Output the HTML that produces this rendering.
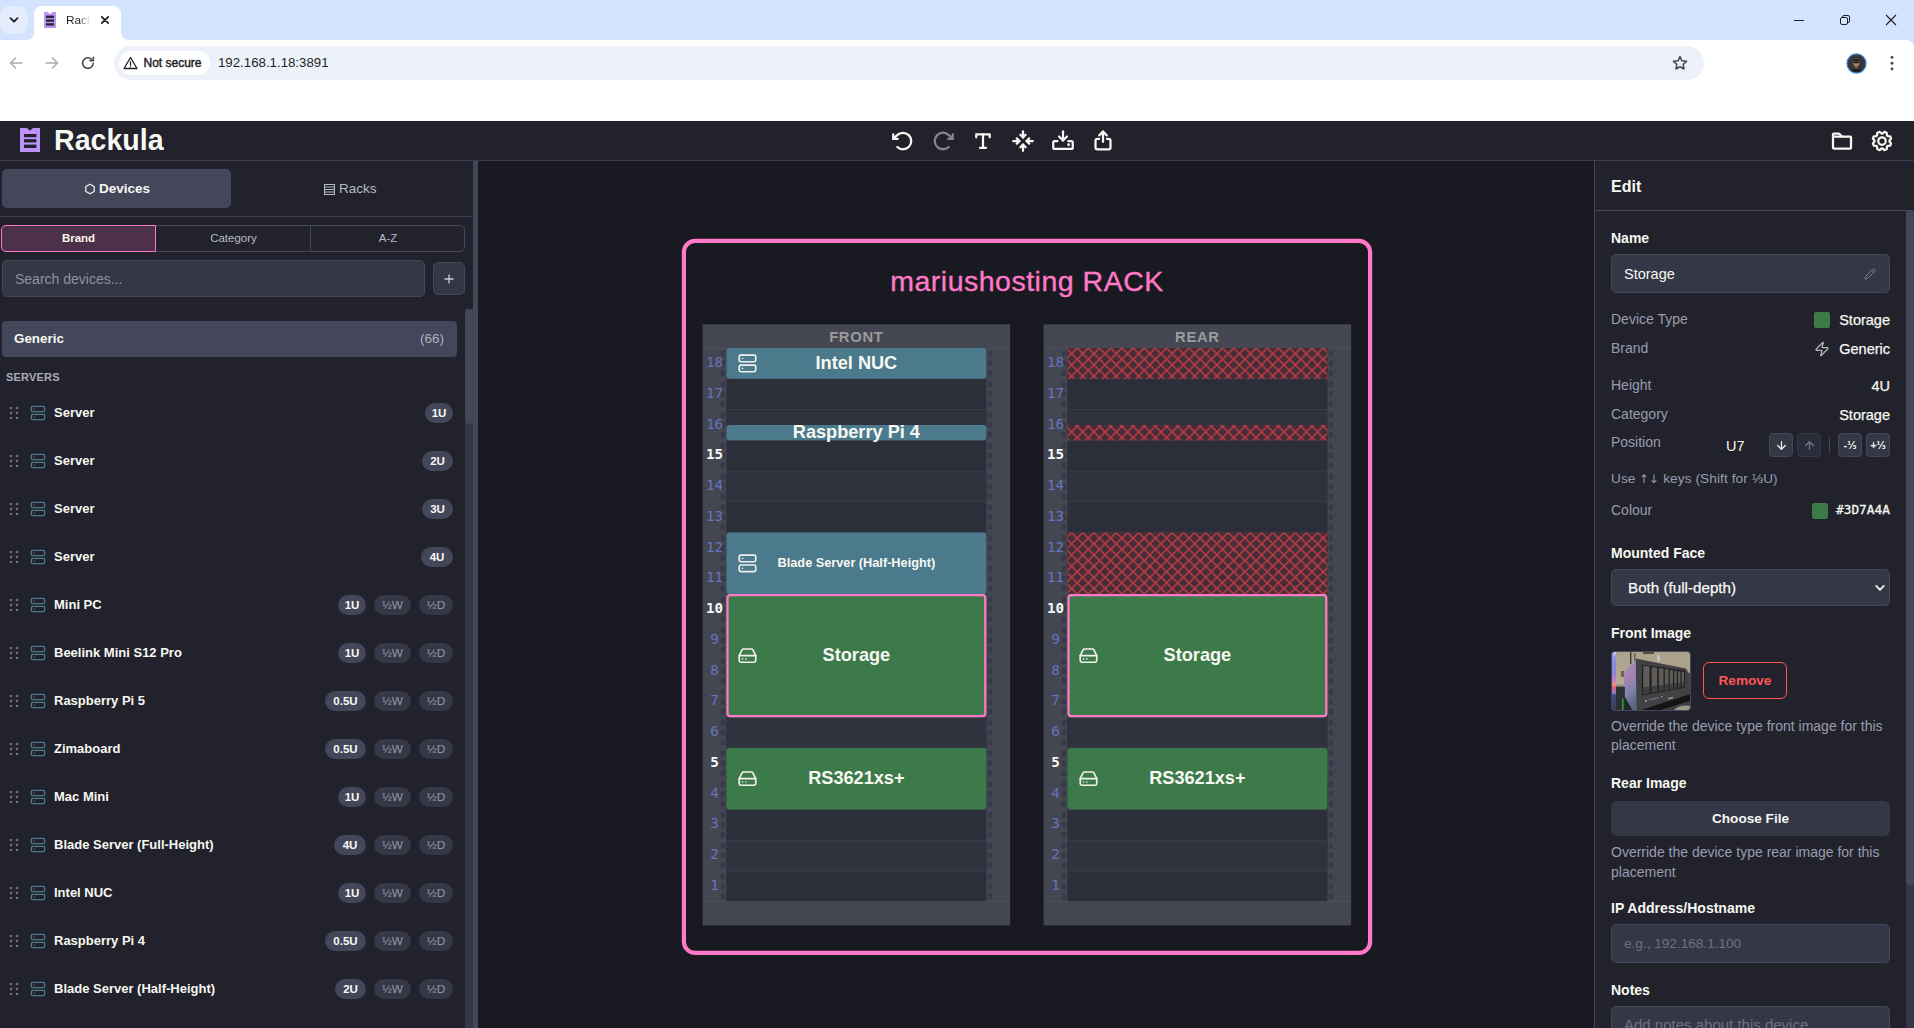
<!DOCTYPE html>
<html lang="en"><head><meta charset="utf-8"><title>Rackula</title>
<style>
*{box-sizing:border-box;margin:0;padding:0}
html,body{width:1914px;height:1028px;overflow:hidden;background:#d3e3fd}
body{position:relative;font-family:"Liberation Sans",sans-serif;color:#f8f8f2;-webkit-font-smoothing:antialiased}
.abs{position:absolute}
.t{position:absolute;white-space:nowrap;line-height:1}
.mono{font-family:"DejaVu Sans Mono","Liberation Mono",monospace}
/* chrome */
#tabstrip{position:absolute;left:0;top:0;width:1914px;height:40px;background:#d3e3fd}
#toolbar{position:absolute;left:0;top:40px;width:1914px;height:81px;background:#fff;border-top-right-radius:8px}
/* app */
#app{position:absolute;left:0;top:121px;width:1914px;height:907px;background:#191a21;overflow:hidden}
#hdr{position:absolute;left:0;top:0;width:1914px;height:40px;background:#21222c;border-bottom:1px solid #3b3d4e}
#side{position:absolute;left:0;top:40px;width:473px;height:867px;background:#21222c;overflow:hidden}
#split{position:absolute;left:473px;top:40px;width:5px;height:867px;background:#44475a}
#panel{position:absolute;left:1594px;top:40px;width:320px;height:867px;background:#21222c;border-left:1px solid #44475a;overflow:hidden}
.pill{position:absolute;height:20px;border-radius:10px;background:#44475a;color:#f8f8f2;font-weight:bold;font-size:11.5px;line-height:20px;text-align:center}
.pill.h{background:#363848;color:#9799a8;font-weight:normal;font-size:11.8px}
.lbl{position:absolute;white-space:nowrap;line-height:1;font-weight:bold;font-size:14px;color:#f8f8f2}
.mut{position:absolute;white-space:nowrap;line-height:1;font-size:14px;color:#9a9cb0}
.val{position:absolute;white-space:nowrap;line-height:1;font-size:14.5px;color:#f8f8f2;text-align:right;-webkit-text-stroke:0.25px #f8f8f2}
.inp{position:absolute;background:#343746;border:1px solid #44475a;border-radius:5px}
.sbtn{position:absolute;width:24px;height:24px;border-radius:4px;background:#343746;border:1px solid #44475a;color:#f8f8f2;font-size:11px;font-weight:bold;line-height:22px;text-align:center}

</style></head><body>
<div id="tabstrip"><div class="abs" style="left:0;top:6px;width:28px;height:28px;border-radius:9px;background:#e4ecfc"></div><svg class="abs" style="left:8px;top:14px" width="12" height="12" viewBox="0 0 12 12" fill="none" stroke="#1f1f1f" stroke-width="1.8" stroke-linecap="round" stroke-linejoin="round"><path d="M2.5 4.2 6 7.7l3.5-3.5"/></svg><svg class="abs" style="left:26px;top:6px" width="104" height="34" viewBox="0 0 104 34"><path d="M0 34 C5 34 8 31 8 26 V8 C8 3.5 11.5 0 16 0 H87 C91.5 0 95 3.5 95 8 V26 C95 31 98 34 104 34 Z" fill="#fff"/></svg><svg class="abs" style="left:44px;top:12px" width="12" height="16" viewBox="0 0 12 16"><path d="M0 0H3.5L6 2 8.5 0H12V16H0Z" fill="#bd93f9"/><rect x="2" y="3.6" width="8" height="2.4" fill="#282a36"/><rect x="2" y="7.4" width="8" height="2.4" fill="#282a36"/><rect x="2" y="11.2" width="8" height="2.4" fill="#282a36"/></svg><div class="t" style="left:66px;top:15px;font-size:11.8px;color:#1f1f1f;width:24px;overflow:hidden;-webkit-mask-image:linear-gradient(90deg,#000 55%,transparent 100%);mask-image:linear-gradient(90deg,#000 55%,transparent 100%)">Rackula</div><svg class="abs" style="left:100px;top:15.2px" width="10" height="10" viewBox="0 0 10 10" stroke="#1f1f1f" stroke-width="1.75" stroke-linecap="round"><path d="M1.8 1.8l6.4 6.4M8.2 1.8l-6.4 6.4"/></svg><svg class="abs" style="left:1793px;top:14px" width="12" height="12" viewBox="0 0 12 12" stroke="#1f1f1f" stroke-width="1" fill="none"><path d="M1 6.5h10"/></svg><svg class="abs" style="left:1839px;top:14px" width="12" height="12" viewBox="0 0 12 12" stroke="#1f1f1f" stroke-width="1" fill="none"><rect x="1.5" y="3.5" width="7" height="7" rx="1.5"/><path d="M3.5 3.5V3A1.5 1.5 0 0 1 5 1.5h4A1.5 1.5 0 0 1 10.5 3v4A1.5 1.5 0 0 1 9 8.5h-.5"/></svg><svg class="abs" style="left:1885px;top:14px" width="12" height="12" viewBox="0 0 12 12" stroke="#1f1f1f" stroke-width="1.1" fill="none"><path d="M1 1l10 10M11 1L1 11"/></svg></div><div id="toolbar"><svg class="abs" style="left:8px;top:15px" width="16" height="16" viewBox="0 0 16 16" stroke="#a8abb0" stroke-width="1.5" fill="none" stroke-linecap="round" stroke-linejoin="round"><path d="M14 8H2.5M7.5 3 2.5 8l5 5"/></svg><svg class="abs" style="left:44px;top:15px" width="16" height="16" viewBox="0 0 16 16" stroke="#a8abb0" stroke-width="1.5" fill="none" stroke-linecap="round" stroke-linejoin="round"><path d="M2 8h11.5M8.5 3l5 5-5 5"/></svg><svg class="abs" style="left:80px;top:15px" width="16" height="16" viewBox="0 0 16 16" stroke="#474747" stroke-width="1.6" fill="none" stroke-linecap="round" stroke-linejoin="round"><path d="M13.2 8.3A5.3 5.3 0 1 1 11.6 4.2"/><path d="M13.4 2.2v3.4H10" fill="none"/></svg><div class="abs" style="left:114px;top:6px;width:1590px;height:34px;border-radius:17px;background:#edf2fa"></div><div class="abs" style="left:119px;top:11px;width:91px;height:24px;border-radius:12px;background:#fff"></div><svg class="abs" style="left:123px;top:16px" width="15" height="14" viewBox="0 0 15 14" fill="none" stroke="#1f1f1f" stroke-width="1.3" stroke-linejoin="round" stroke-linecap="round"><path d="M7.5 1.5 14 12.5H1Z"/><path d="M7.5 5.8v3.4"/><path d="M7.5 10.8v.1"/></svg><div class="t" style="left:143.5px;top:17px;font-size:12px;color:#1f1f1f;-webkit-text-stroke:0.45px #1f1f1f">Not secure</div><div class="t" style="left:218px;top:16px;font-size:13.25px;color:#1f1f1f">192.168.1.18:3891</div><svg class="abs" style="left:1671px;top:14px" width="18" height="18" viewBox="0 0 24 24" fill="none" stroke="#474747" stroke-width="2" stroke-linejoin="round"><path d="M12 3.5l2.6 5.6 6.1.7-4.5 4.2 1.2 6L12 17l-5.4 3 1.2-6-4.5-4.2 6.1-.7z"/></svg><svg class="abs" style="left:1845.5px;top:12.7px" width="21" height="21" viewBox="0 0 21 21"><circle cx="10.5" cy="10.5" r="9.4" fill="#37363a"/><ellipse cx="10.3" cy="9.6" rx="3.1" ry="4" fill="#a98265"/><path d="M6.8 7.2Q10.3 4.2 13.6 7.200L13.4 8.400H7Z" fill="#241f1f"/><rect x="7.4" y="8.7" width="5.6" height="1.6" rx="0.7" fill="#1b1a1c"/><path d="M4.5 18Q10.5 12.5 16.5 18Q10.5 21.5 4.5 18Z" fill="#1f1e22"/><path d="M9 13.200h2.800l-0.3 2.300h-2.200Z" fill="#8e6c55"/><circle cx="10.5" cy="10.5" r="9.6" fill="none" stroke="#3a8ad6" stroke-width="1.1"/></svg><svg class="abs" style="left:1884px;top:14px" width="16" height="18" viewBox="0 0 16 18" fill="#474747"><circle cx="8" cy="3.4" r="1.45"/><circle cx="8" cy="9.2" r="1.45"/><circle cx="8" cy="15" r="1.45"/></svg></div><div id="app"><div id="hdr"><svg class="abs" style="left:20px;top:7px" width="20" height="24" viewBox="0 0 20 24"><path d="M0 0H7L10 2.8 13 0H20V24H0Z" fill="#bd93f9"/><rect x="4" y="6" width="12.4" height="3.2" fill="#21222c"/><rect x="4" y="11.2" width="12.4" height="3.2" fill="#21222c"/><rect x="4" y="16.6" width="12.4" height="3.4" fill="#21222c"/></svg><div class="t" id="brandname" style="left:54px;top:5px;font-size:28.6px;font-weight:bold;color:#f8f8f2;letter-spacing:0px">Rackula</div><svg class="abs" style="left:891px;top:8px" width="24" height="24" viewBox="0 0 256 256" fill="none" stroke="#f8f8f2" stroke-width="24" stroke-linecap="round" stroke-linejoin="round"><polyline points="24 56 24 104 72 104"/><path d="M67.59,192A88,88,0,1,0,65.77,65.77L24,104"/></svg><svg class="abs" style="left:931px;top:8px" width="24" height="24" viewBox="0 0 256 256" fill="none" stroke="#85868f" stroke-width="24" stroke-linecap="round" stroke-linejoin="round"><polyline points="184 104 232 104 232 56"/><path d="M188.4,192a88,88,0,1,1,1.83-126.23L232,104"/></svg><svg class="abs" style="left:971px;top:8px" width="24" height="24" viewBox="0 0 256 256" fill="none" stroke="#f8f8f2" stroke-width="24" stroke-linecap="round" stroke-linejoin="round"><line x1="128" y1="56" x2="128" y2="200"/><polyline points="56 88 56 56 200 56 200 88"/><line x1="96" y1="200" x2="160" y2="200"/></svg><svg class="abs" style="left:1011px;top:8px" width="24" height="24" viewBox="0 0 256 256" fill="none" stroke="#f8f8f2" stroke-width="24" stroke-linecap="round" stroke-linejoin="round"><line x1="128" y1="24" x2="128" y2="90"/><polyline points="100 62 128 90 156 62"/><line x1="128" y1="232" x2="128" y2="166"/><polyline points="100 194 128 166 156 194"/><line x1="24" y1="128" x2="90" y2="128"/><polyline points="62 100 90 128 62 156"/><line x1="232" y1="128" x2="166" y2="128"/><polyline points="194 100 166 128 194 156"/></svg><svg class="abs" style="left:1051px;top:8px" width="24" height="24" viewBox="0 0 256 256" fill="none" stroke="#f8f8f2" stroke-width="24" stroke-linecap="round" stroke-linejoin="round"><polyline points="86 80 128 122 170 80"/><line x1="128" y1="24" x2="128" y2="122"/><path d="M184,129h32a16,16,0,0,1,16,16v51a16,16,0,0,1-16,16H40a16,16,0,0,1-16-16V145a16,16,0,0,1,16-16H70"/><circle cx="188" cy="168" r="15" fill="#f8f8f2" stroke="none"/></svg><svg class="abs" style="left:1091px;top:8px" width="24" height="24" viewBox="0 0 256 256" fill="none" stroke="#f8f8f2" stroke-width="24" stroke-linecap="round" stroke-linejoin="round"><polyline points="88 68 128 28 168 68"/><line x1="128" y1="136" x2="128" y2="28"/><path d="M170,106h18a20,20,0,0,1,20,20v70a20,20,0,0,1-20,20H68a20,20,0,0,1-20-20V126a20,20,0,0,1,20-20H86"/></svg><svg class="abs" style="left:1830px;top:8px" width="24" height="24" viewBox="0 0 256 256" fill="none" stroke="#f8f8f2" stroke-width="24" stroke-linecap="round" stroke-linejoin="round"><path d="M32,80V56a8,8,0,0,1,8-8H92.690a8,8,0,0,1,5.650,2.340L128,80"/><path d="M216.890,208H39.380A7.400,7.400,0,0,1,32,200.620V80H216a8,8,0,0,1,8,8V200.890A7.110,7.110,0,0,1,216.890,208Z"/></svg><svg class="abs" style="left:1870px;top:8px" width="24" height="24" viewBox="0 0 256 256" fill="none" stroke="#f8f8f2" stroke-width="24" stroke-linecap="round" stroke-linejoin="round"><circle cx="128" cy="128" r="40"/><path d="M41.43,178.09A99.14,99.14,0,0,1,31.36,153.8l16.78-21a81.59,81.59,0,0,1,0-9.64l-16.77-21a99.43,99.43,0,0,1,10.05-24.3l26.71-3a81,81,0,0,1,6.81-6.81l3-26.7A99.14,99.14,0,0,1,102.2,31.36l21,16.78a81.59,81.59,0,0,1,9.64,0l21-16.77a99.43,99.43,0,0,1,24.3,10.05l3,26.71a81,81,0,0,1,6.81,6.81l26.7,3a99.14,99.14,0,0,1,10.07,24.29l-16.78,21a81.59,81.59,0,0,1,0,9.64l16.77,21a99.43,99.43,0,0,1-10,24.3l-26.71,3a81,81,0,0,1-6.81,6.81l-3,26.7a99.14,99.14,0,0,1-24.29,10.07l-21-16.78a81.59,81.59,0,0,1-9.64,0l-21,16.77a99.43,99.43,0,0,1-24.3-10l-3-26.71a81,81,0,0,1-6.81-6.81Z"/></svg></div><div id="side"><div class="abs" style="left:2px;top:8px;width:229px;height:39px;border-radius:5px;background:#44475a"></div><svg class="abs" style="left:84px;top:22px" width="12" height="12" viewBox="0 0 12 12" fill="none" stroke="#f8f8f2" stroke-width="1.2" stroke-linejoin="round"><path d="M6 1.2 10.2 3.6V8.4L6 10.8 1.8 8.4V3.6Z"/></svg><div class="t" style="left:99px;top:21px;font-size:13.5px;font-weight:bold;color:#f8f8f2">Devices</div><svg class="abs" style="left:324px;top:22.599999999999994px" width="11" height="11" viewBox="0 0 11 11" fill="none" stroke="#b9bbc8" stroke-width="1"><rect x="0.5" y="0.5" width="10" height="10"/><path d="M0.5 3h10M0.5 5.5h10M0.5 8h10"/></svg><div class="t" style="left:339px;top:21px;font-size:13.5px;color:#b9bbc8">Racks</div><div class="abs" style="left:0;top:55px;width:473px;height:1px;background:#3b3d4e"></div><div class="abs" style="left:1px;top:64px;width:464px;height:27px;border:1px solid #44475a;border-radius:5px"></div><div class="abs" style="left:310px;top:64px;width:1px;height:27px;background:#44475a"></div><div class="abs" style="left:1px;top:64px;width:155px;height:27px;border:1px solid #ff79c6;border-radius:5px 0 0 5px;background:#4d3049"></div><div class="t" style="left:1px;width:155px;text-align:center;top:72px;font-size:11.5px;font-weight:bold;color:#f8f8f2">Brand</div><div class="t" style="left:156px;width:155px;text-align:center;top:72px;font-size:11.5px;color:#b9bbc8">Category</div><div class="t" style="left:311px;width:154px;text-align:center;top:72px;font-size:11.5px;color:#b9bbc8">A-Z</div><div class="inp" style="left:2px;top:99px;width:423px;height:37px"></div><div class="t" style="left:15px;top:110.60000000000002px;font-size:14px;color:#8f91a3">Search devices...</div><div class="inp" style="left:433px;top:101px;width:32px;height:33px"></div><svg class="abs" style="left:444px;top:112.5px" width="10" height="10" viewBox="0 0 10 10" stroke="#c9cbd6" stroke-width="1.3" fill="none"><path d="M5 0.5v9M0.5 5h9"/></svg><div class="abs" style="left:465px;top:148px;width:8px;height:720px;background:#343746"></div><div class="abs" style="left:465px;top:148px;width:8px;height:115px;border-radius:4px;background:#44475a"></div><div class="abs" style="left:2px;top:160px;width:455px;height:36px;border-radius:4px;background:#44475a"></div><div class="t" style="left:14px;top:170.8px;font-size:13.4px;font-weight:bold;color:#f8f8f2">Generic</div><div class="t" style="left:390px;width:54px;text-align:right;top:171px;font-size:13.5px;color:#b0b2c0">(66)</div><div class="t" style="left:6px;top:211px;font-size:11px;font-weight:bold;color:#a9abbb;letter-spacing:0.2px">SERVERS</div><svg class="abs" style="left:9px;top:245.04999999999998px" width="10" height="14" viewBox="0 0 10 14" fill="#6f7082"><circle cx="2" cy="2" r="1.3"/><circle cx="2" cy="7" r="1.3"/><circle cx="2" cy="12" r="1.3"/><circle cx="8" cy="2" r="1.3"/><circle cx="8" cy="7" r="1.3"/><circle cx="8" cy="12" r="1.3"/></svg><svg style="position:absolute;left:30px;top:244.2px;" width="16" height="16" viewBox="0 0 24 24" fill="none" stroke="#4a7a8c" stroke-width="2" stroke-linecap="round" stroke-linejoin="round"><rect width="20" height="8" x="2" y="2" rx="2" ry="2"/><rect width="20" height="8" x="2" y="14" rx="2" ry="2"/><line x1="6" x2="6.01" y1="6" y2="6"/><line x1="6" x2="6.01" y1="18" y2="18"/></svg><div class="t" style="left:54px;top:244.89999999999998px;font-size:13px;font-weight:bold;color:#f8f8f2">Server</div><div class="pill" style="left:425px;top:241.89999999999998px;width:28px">1U</div><svg class="abs" style="left:9px;top:293.04999999999995px" width="10" height="14" viewBox="0 0 10 14" fill="#6f7082"><circle cx="2" cy="2" r="1.3"/><circle cx="2" cy="7" r="1.3"/><circle cx="2" cy="12" r="1.3"/><circle cx="8" cy="2" r="1.3"/><circle cx="8" cy="7" r="1.3"/><circle cx="8" cy="12" r="1.3"/></svg><svg style="position:absolute;left:30px;top:292.2px;" width="16" height="16" viewBox="0 0 24 24" fill="none" stroke="#4a7a8c" stroke-width="2" stroke-linecap="round" stroke-linejoin="round"><rect width="20" height="8" x="2" y="2" rx="2" ry="2"/><rect width="20" height="8" x="2" y="14" rx="2" ry="2"/><line x1="6" x2="6.01" y1="6" y2="6"/><line x1="6" x2="6.01" y1="18" y2="18"/></svg><div class="t" style="left:54px;top:292.9px;font-size:13px;font-weight:bold;color:#f8f8f2">Server</div><div class="pill" style="left:422px;top:289.9px;width:31px">2U</div><svg class="abs" style="left:9px;top:341.04999999999995px" width="10" height="14" viewBox="0 0 10 14" fill="#6f7082"><circle cx="2" cy="2" r="1.3"/><circle cx="2" cy="7" r="1.3"/><circle cx="2" cy="12" r="1.3"/><circle cx="8" cy="2" r="1.3"/><circle cx="8" cy="7" r="1.3"/><circle cx="8" cy="12" r="1.3"/></svg><svg style="position:absolute;left:30px;top:340.2px;" width="16" height="16" viewBox="0 0 24 24" fill="none" stroke="#4a7a8c" stroke-width="2" stroke-linecap="round" stroke-linejoin="round"><rect width="20" height="8" x="2" y="2" rx="2" ry="2"/><rect width="20" height="8" x="2" y="14" rx="2" ry="2"/><line x1="6" x2="6.01" y1="6" y2="6"/><line x1="6" x2="6.01" y1="18" y2="18"/></svg><div class="t" style="left:54px;top:340.9px;font-size:13px;font-weight:bold;color:#f8f8f2">Server</div><div class="pill" style="left:422px;top:337.9px;width:31px">3U</div><svg class="abs" style="left:9px;top:389.04999999999995px" width="10" height="14" viewBox="0 0 10 14" fill="#6f7082"><circle cx="2" cy="2" r="1.3"/><circle cx="2" cy="7" r="1.3"/><circle cx="2" cy="12" r="1.3"/><circle cx="8" cy="2" r="1.3"/><circle cx="8" cy="7" r="1.3"/><circle cx="8" cy="12" r="1.3"/></svg><svg style="position:absolute;left:30px;top:388.2px;" width="16" height="16" viewBox="0 0 24 24" fill="none" stroke="#4a7a8c" stroke-width="2" stroke-linecap="round" stroke-linejoin="round"><rect width="20" height="8" x="2" y="2" rx="2" ry="2"/><rect width="20" height="8" x="2" y="14" rx="2" ry="2"/><line x1="6" x2="6.01" y1="6" y2="6"/><line x1="6" x2="6.01" y1="18" y2="18"/></svg><div class="t" style="left:54px;top:388.9px;font-size:13px;font-weight:bold;color:#f8f8f2">Server</div><div class="pill" style="left:421px;top:385.9px;width:32px">4U</div><svg class="abs" style="left:9px;top:437.04999999999995px" width="10" height="14" viewBox="0 0 10 14" fill="#6f7082"><circle cx="2" cy="2" r="1.3"/><circle cx="2" cy="7" r="1.3"/><circle cx="2" cy="12" r="1.3"/><circle cx="8" cy="2" r="1.3"/><circle cx="8" cy="7" r="1.3"/><circle cx="8" cy="12" r="1.3"/></svg><svg style="position:absolute;left:30px;top:436.2px;" width="16" height="16" viewBox="0 0 24 24" fill="none" stroke="#4a7a8c" stroke-width="2" stroke-linecap="round" stroke-linejoin="round"><rect width="20" height="8" x="2" y="2" rx="2" ry="2"/><rect width="20" height="8" x="2" y="14" rx="2" ry="2"/><line x1="6" x2="6.01" y1="6" y2="6"/><line x1="6" x2="6.01" y1="18" y2="18"/></svg><div class="t" style="left:54px;top:436.9px;font-size:13px;font-weight:bold;color:#f8f8f2">Mini PC</div><div class="pill h" style="left:419px;top:433.9px;width:34px">½D</div><div class="pill h" style="left:374px;top:433.9px;width:37px">½W</div><div class="pill" style="left:338px;top:433.9px;width:28px">1U</div><svg class="abs" style="left:9px;top:485.04999999999995px" width="10" height="14" viewBox="0 0 10 14" fill="#6f7082"><circle cx="2" cy="2" r="1.3"/><circle cx="2" cy="7" r="1.3"/><circle cx="2" cy="12" r="1.3"/><circle cx="8" cy="2" r="1.3"/><circle cx="8" cy="7" r="1.3"/><circle cx="8" cy="12" r="1.3"/></svg><svg style="position:absolute;left:30px;top:484.2px;" width="16" height="16" viewBox="0 0 24 24" fill="none" stroke="#4a7a8c" stroke-width="2" stroke-linecap="round" stroke-linejoin="round"><rect width="20" height="8" x="2" y="2" rx="2" ry="2"/><rect width="20" height="8" x="2" y="14" rx="2" ry="2"/><line x1="6" x2="6.01" y1="6" y2="6"/><line x1="6" x2="6.01" y1="18" y2="18"/></svg><div class="t" style="left:54px;top:484.9px;font-size:13px;font-weight:bold;color:#f8f8f2">Beelink Mini S12 Pro</div><div class="pill h" style="left:419px;top:481.9px;width:34px">½D</div><div class="pill h" style="left:374px;top:481.9px;width:37px">½W</div><div class="pill" style="left:338px;top:481.9px;width:28px">1U</div><svg class="abs" style="left:9px;top:533.05px" width="10" height="14" viewBox="0 0 10 14" fill="#6f7082"><circle cx="2" cy="2" r="1.3"/><circle cx="2" cy="7" r="1.3"/><circle cx="2" cy="12" r="1.3"/><circle cx="8" cy="2" r="1.3"/><circle cx="8" cy="7" r="1.3"/><circle cx="8" cy="12" r="1.3"/></svg><svg style="position:absolute;left:30px;top:532.1999999999999px;" width="16" height="16" viewBox="0 0 24 24" fill="none" stroke="#4a7a8c" stroke-width="2" stroke-linecap="round" stroke-linejoin="round"><rect width="20" height="8" x="2" y="2" rx="2" ry="2"/><rect width="20" height="8" x="2" y="14" rx="2" ry="2"/><line x1="6" x2="6.01" y1="6" y2="6"/><line x1="6" x2="6.01" y1="18" y2="18"/></svg><div class="t" style="left:54px;top:532.9px;font-size:13px;font-weight:bold;color:#f8f8f2">Raspberry Pi 5</div><div class="pill h" style="left:419px;top:529.9px;width:34px">½D</div><div class="pill h" style="left:374px;top:529.9px;width:37px">½W</div><div class="pill" style="left:325px;top:529.9px;width:41px">0.5U</div><svg class="abs" style="left:9px;top:581.05px" width="10" height="14" viewBox="0 0 10 14" fill="#6f7082"><circle cx="2" cy="2" r="1.3"/><circle cx="2" cy="7" r="1.3"/><circle cx="2" cy="12" r="1.3"/><circle cx="8" cy="2" r="1.3"/><circle cx="8" cy="7" r="1.3"/><circle cx="8" cy="12" r="1.3"/></svg><svg style="position:absolute;left:30px;top:580.1999999999999px;" width="16" height="16" viewBox="0 0 24 24" fill="none" stroke="#4a7a8c" stroke-width="2" stroke-linecap="round" stroke-linejoin="round"><rect width="20" height="8" x="2" y="2" rx="2" ry="2"/><rect width="20" height="8" x="2" y="14" rx="2" ry="2"/><line x1="6" x2="6.01" y1="6" y2="6"/><line x1="6" x2="6.01" y1="18" y2="18"/></svg><div class="t" style="left:54px;top:580.9px;font-size:13px;font-weight:bold;color:#f8f8f2">Zimaboard</div><div class="pill h" style="left:419px;top:577.9px;width:34px">½D</div><div class="pill h" style="left:374px;top:577.9px;width:37px">½W</div><div class="pill" style="left:325px;top:577.9px;width:41px">0.5U</div><svg class="abs" style="left:9px;top:629.05px" width="10" height="14" viewBox="0 0 10 14" fill="#6f7082"><circle cx="2" cy="2" r="1.3"/><circle cx="2" cy="7" r="1.3"/><circle cx="2" cy="12" r="1.3"/><circle cx="8" cy="2" r="1.3"/><circle cx="8" cy="7" r="1.3"/><circle cx="8" cy="12" r="1.3"/></svg><svg style="position:absolute;left:30px;top:628.1999999999999px;" width="16" height="16" viewBox="0 0 24 24" fill="none" stroke="#4a7a8c" stroke-width="2" stroke-linecap="round" stroke-linejoin="round"><rect width="20" height="8" x="2" y="2" rx="2" ry="2"/><rect width="20" height="8" x="2" y="14" rx="2" ry="2"/><line x1="6" x2="6.01" y1="6" y2="6"/><line x1="6" x2="6.01" y1="18" y2="18"/></svg><div class="t" style="left:54px;top:628.9px;font-size:13px;font-weight:bold;color:#f8f8f2">Mac Mini</div><div class="pill h" style="left:419px;top:625.9px;width:34px">½D</div><div class="pill h" style="left:374px;top:625.9px;width:37px">½W</div><div class="pill" style="left:338px;top:625.9px;width:28px">1U</div><svg class="abs" style="left:9px;top:677.05px" width="10" height="14" viewBox="0 0 10 14" fill="#6f7082"><circle cx="2" cy="2" r="1.3"/><circle cx="2" cy="7" r="1.3"/><circle cx="2" cy="12" r="1.3"/><circle cx="8" cy="2" r="1.3"/><circle cx="8" cy="7" r="1.3"/><circle cx="8" cy="12" r="1.3"/></svg><svg style="position:absolute;left:30px;top:676.1999999999999px;" width="16" height="16" viewBox="0 0 24 24" fill="none" stroke="#4a7a8c" stroke-width="2" stroke-linecap="round" stroke-linejoin="round"><rect width="20" height="8" x="2" y="2" rx="2" ry="2"/><rect width="20" height="8" x="2" y="14" rx="2" ry="2"/><line x1="6" x2="6.01" y1="6" y2="6"/><line x1="6" x2="6.01" y1="18" y2="18"/></svg><div class="t" style="left:54px;top:676.9px;font-size:13px;font-weight:bold;color:#f8f8f2">Blade Server (Full-Height)</div><div class="pill h" style="left:419px;top:673.9px;width:34px">½D</div><div class="pill h" style="left:374px;top:673.9px;width:37px">½W</div><div class="pill" style="left:334px;top:673.9px;width:32px">4U</div><svg class="abs" style="left:9px;top:725.05px" width="10" height="14" viewBox="0 0 10 14" fill="#6f7082"><circle cx="2" cy="2" r="1.3"/><circle cx="2" cy="7" r="1.3"/><circle cx="2" cy="12" r="1.3"/><circle cx="8" cy="2" r="1.3"/><circle cx="8" cy="7" r="1.3"/><circle cx="8" cy="12" r="1.3"/></svg><svg style="position:absolute;left:30px;top:724.1999999999999px;" width="16" height="16" viewBox="0 0 24 24" fill="none" stroke="#4a7a8c" stroke-width="2" stroke-linecap="round" stroke-linejoin="round"><rect width="20" height="8" x="2" y="2" rx="2" ry="2"/><rect width="20" height="8" x="2" y="14" rx="2" ry="2"/><line x1="6" x2="6.01" y1="6" y2="6"/><line x1="6" x2="6.01" y1="18" y2="18"/></svg><div class="t" style="left:54px;top:724.9px;font-size:13px;font-weight:bold;color:#f8f8f2">Intel NUC</div><div class="pill h" style="left:419px;top:721.9px;width:34px">½D</div><div class="pill h" style="left:374px;top:721.9px;width:37px">½W</div><div class="pill" style="left:338px;top:721.9px;width:28px">1U</div><svg class="abs" style="left:9px;top:773.05px" width="10" height="14" viewBox="0 0 10 14" fill="#6f7082"><circle cx="2" cy="2" r="1.3"/><circle cx="2" cy="7" r="1.3"/><circle cx="2" cy="12" r="1.3"/><circle cx="8" cy="2" r="1.3"/><circle cx="8" cy="7" r="1.3"/><circle cx="8" cy="12" r="1.3"/></svg><svg style="position:absolute;left:30px;top:772.1999999999999px;" width="16" height="16" viewBox="0 0 24 24" fill="none" stroke="#4a7a8c" stroke-width="2" stroke-linecap="round" stroke-linejoin="round"><rect width="20" height="8" x="2" y="2" rx="2" ry="2"/><rect width="20" height="8" x="2" y="14" rx="2" ry="2"/><line x1="6" x2="6.01" y1="6" y2="6"/><line x1="6" x2="6.01" y1="18" y2="18"/></svg><div class="t" style="left:54px;top:772.9px;font-size:13px;font-weight:bold;color:#f8f8f2">Raspberry Pi 4</div><div class="pill h" style="left:419px;top:769.9px;width:34px">½D</div><div class="pill h" style="left:374px;top:769.9px;width:37px">½W</div><div class="pill" style="left:325px;top:769.9px;width:41px">0.5U</div><svg class="abs" style="left:9px;top:821.05px" width="10" height="14" viewBox="0 0 10 14" fill="#6f7082"><circle cx="2" cy="2" r="1.3"/><circle cx="2" cy="7" r="1.3"/><circle cx="2" cy="12" r="1.3"/><circle cx="8" cy="2" r="1.3"/><circle cx="8" cy="7" r="1.3"/><circle cx="8" cy="12" r="1.3"/></svg><svg style="position:absolute;left:30px;top:820.1999999999999px;" width="16" height="16" viewBox="0 0 24 24" fill="none" stroke="#4a7a8c" stroke-width="2" stroke-linecap="round" stroke-linejoin="round"><rect width="20" height="8" x="2" y="2" rx="2" ry="2"/><rect width="20" height="8" x="2" y="14" rx="2" ry="2"/><line x1="6" x2="6.01" y1="6" y2="6"/><line x1="6" x2="6.01" y1="18" y2="18"/></svg><div class="t" style="left:54px;top:820.9px;font-size:13px;font-weight:bold;color:#f8f8f2">Blade Server (Half-Height)</div><div class="pill h" style="left:419px;top:817.9px;width:34px">½D</div><div class="pill h" style="left:374px;top:817.9px;width:37px">½W</div><div class="pill" style="left:335px;top:817.9px;width:31px">2U</div></div><div id="split"></div><svg class="abs" style="left:478px;top:40px" width="1116" height="867" viewBox="478 161 1116 867"><defs><pattern id="hatch" patternUnits="userSpaceOnUse" x="0" y="1" width="8" height="8"><rect width="8" height="8" fill="#452d3a"/><path d="M-1 -1 9 9M9 -1-1 9" stroke="#c53d44" stroke-width="1.05" fill="none"/></pattern></defs><rect x="683.9" y="240.9" width="686.2" height="712" rx="11.2" fill="none" stroke="#ff79c6" stroke-width="4.2"/><text x="1027" y="291" text-anchor="middle" font-family="Liberation Sans, sans-serif" font-size="28.5" letter-spacing="0.5" fill="#ff79c6" stroke="#ff79c6" stroke-width="0.35" id="racktitle">mariushosting RACK</text><g transform="translate(702.6,324.3) scale(1.398)"><rect x="0" y="0" width="220" height="430" fill="#444652"/><rect x="17" y="17" width="186" height="396" fill="#2c2e3a"/><rect x="17" y="17" width="186" height="22" fill="#30323e"/><rect x="17" y="61" width="186" height="22" fill="#30323e"/><rect x="17" y="105" width="186" height="22" fill="#30323e"/><rect x="17" y="149" width="186" height="22" fill="#30323e"/><rect x="17" y="193" width="186" height="22" fill="#30323e"/><rect x="17" y="237" width="186" height="22" fill="#30323e"/><rect x="17" y="281" width="186" height="22" fill="#30323e"/><rect x="17" y="325" width="186" height="22" fill="#30323e"/><rect x="17" y="369" width="186" height="22" fill="#30323e"/><rect x="0" y="16.65" width="220" height="0.7" fill="#555766" opacity="0.6"/><rect x="17" y="38.65" width="186" height="0.7" fill="#4c4e5c" opacity="0.5"/><rect x="17" y="60.65" width="186" height="0.7" fill="#4c4e5c" opacity="0.5"/><rect x="17" y="82.65" width="186" height="0.7" fill="#4c4e5c" opacity="0.5"/><rect x="17" y="104.65" width="186" height="0.7" fill="#4c4e5c" opacity="0.5"/><rect x="17" y="126.65" width="186" height="0.7" fill="#4c4e5c" opacity="0.5"/><rect x="17" y="148.65" width="186" height="0.7" fill="#4c4e5c" opacity="0.5"/><rect x="17" y="170.65" width="186" height="0.7" fill="#4c4e5c" opacity="0.5"/><rect x="17" y="192.65" width="186" height="0.7" fill="#4c4e5c" opacity="0.5"/><rect x="17" y="214.65" width="186" height="0.7" fill="#4c4e5c" opacity="0.5"/><rect x="17" y="236.65" width="186" height="0.7" fill="#4c4e5c" opacity="0.5"/><rect x="17" y="258.65" width="186" height="0.7" fill="#4c4e5c" opacity="0.5"/><rect x="17" y="280.65" width="186" height="0.7" fill="#4c4e5c" opacity="0.5"/><rect x="17" y="302.65" width="186" height="0.7" fill="#4c4e5c" opacity="0.5"/><rect x="17" y="324.65" width="186" height="0.7" fill="#4c4e5c" opacity="0.5"/><rect x="17" y="346.65" width="186" height="0.7" fill="#4c4e5c" opacity="0.5"/><rect x="17" y="368.65" width="186" height="0.7" fill="#4c4e5c" opacity="0.5"/><rect x="17" y="390.65" width="186" height="0.7" fill="#4c4e5c" opacity="0.5"/><rect x="0" y="412.65" width="220" height="0.7" fill="#555766" opacity="0.6"/><g fill="#383a4b"><rect x="13" y="19" width="3" height="4"/><rect x="204" y="19" width="3" height="4"/><rect x="13" y="26" width="3" height="4"/><rect x="204" y="26" width="3" height="4"/><rect x="13" y="33" width="3" height="4"/><rect x="204" y="33" width="3" height="4"/><rect x="13" y="41" width="3" height="4"/><rect x="204" y="41" width="3" height="4"/><rect x="13" y="48" width="3" height="4"/><rect x="204" y="48" width="3" height="4"/><rect x="13" y="55" width="3" height="4"/><rect x="204" y="55" width="3" height="4"/><rect x="13" y="63" width="3" height="4"/><rect x="204" y="63" width="3" height="4"/><rect x="13" y="70" width="3" height="4"/><rect x="204" y="70" width="3" height="4"/><rect x="13" y="77" width="3" height="4"/><rect x="204" y="77" width="3" height="4"/><rect x="13" y="85" width="3" height="4"/><rect x="204" y="85" width="3" height="4"/><rect x="13" y="92" width="3" height="4"/><rect x="204" y="92" width="3" height="4"/><rect x="13" y="99" width="3" height="4"/><rect x="204" y="99" width="3" height="4"/><rect x="13" y="107" width="3" height="4"/><rect x="204" y="107" width="3" height="4"/><rect x="13" y="114" width="3" height="4"/><rect x="204" y="114" width="3" height="4"/><rect x="13" y="121" width="3" height="4"/><rect x="204" y="121" width="3" height="4"/><rect x="13" y="129" width="3" height="4"/><rect x="204" y="129" width="3" height="4"/><rect x="13" y="136" width="3" height="4"/><rect x="204" y="136" width="3" height="4"/><rect x="13" y="143" width="3" height="4"/><rect x="204" y="143" width="3" height="4"/><rect x="13" y="151" width="3" height="4"/><rect x="204" y="151" width="3" height="4"/><rect x="13" y="158" width="3" height="4"/><rect x="204" y="158" width="3" height="4"/><rect x="13" y="165" width="3" height="4"/><rect x="204" y="165" width="3" height="4"/><rect x="13" y="173" width="3" height="4"/><rect x="204" y="173" width="3" height="4"/><rect x="13" y="180" width="3" height="4"/><rect x="204" y="180" width="3" height="4"/><rect x="13" y="187" width="3" height="4"/><rect x="204" y="187" width="3" height="4"/><rect x="13" y="195" width="3" height="4"/><rect x="204" y="195" width="3" height="4"/><rect x="13" y="202" width="3" height="4"/><rect x="204" y="202" width="3" height="4"/><rect x="13" y="209" width="3" height="4"/><rect x="204" y="209" width="3" height="4"/><rect x="13" y="217" width="3" height="4"/><rect x="204" y="217" width="3" height="4"/><rect x="13" y="224" width="3" height="4"/><rect x="204" y="224" width="3" height="4"/><rect x="13" y="231" width="3" height="4"/><rect x="204" y="231" width="3" height="4"/><rect x="13" y="239" width="3" height="4"/><rect x="204" y="239" width="3" height="4"/><rect x="13" y="246" width="3" height="4"/><rect x="204" y="246" width="3" height="4"/><rect x="13" y="253" width="3" height="4"/><rect x="204" y="253" width="3" height="4"/><rect x="13" y="261" width="3" height="4"/><rect x="204" y="261" width="3" height="4"/><rect x="13" y="268" width="3" height="4"/><rect x="204" y="268" width="3" height="4"/><rect x="13" y="275" width="3" height="4"/><rect x="204" y="275" width="3" height="4"/><rect x="13" y="283" width="3" height="4"/><rect x="204" y="283" width="3" height="4"/><rect x="13" y="290" width="3" height="4"/><rect x="204" y="290" width="3" height="4"/><rect x="13" y="297" width="3" height="4"/><rect x="204" y="297" width="3" height="4"/><rect x="13" y="305" width="3" height="4"/><rect x="204" y="305" width="3" height="4"/><rect x="13" y="312" width="3" height="4"/><rect x="204" y="312" width="3" height="4"/><rect x="13" y="319" width="3" height="4"/><rect x="204" y="319" width="3" height="4"/><rect x="13" y="327" width="3" height="4"/><rect x="204" y="327" width="3" height="4"/><rect x="13" y="334" width="3" height="4"/><rect x="204" y="334" width="3" height="4"/><rect x="13" y="341" width="3" height="4"/><rect x="204" y="341" width="3" height="4"/><rect x="13" y="349" width="3" height="4"/><rect x="204" y="349" width="3" height="4"/><rect x="13" y="356" width="3" height="4"/><rect x="204" y="356" width="3" height="4"/><rect x="13" y="363" width="3" height="4"/><rect x="204" y="363" width="3" height="4"/><rect x="13" y="371" width="3" height="4"/><rect x="204" y="371" width="3" height="4"/><rect x="13" y="378" width="3" height="4"/><rect x="204" y="378" width="3" height="4"/><rect x="13" y="385" width="3" height="4"/><rect x="204" y="385" width="3" height="4"/><rect x="13" y="393" width="3" height="4"/><rect x="204" y="393" width="3" height="4"/><rect x="13" y="400" width="3" height="4"/><rect x="204" y="400" width="3" height="4"/><rect x="13" y="407" width="3" height="4"/><rect x="204" y="407" width="3" height="4"/></g><text x="110" y="12.6" text-anchor="middle" font-family="Liberation Sans, sans-serif" font-size="10.6" font-weight="bold" letter-spacing="0.5" fill="#9b9b9b">FRONT</text><text transform="translate(8.5,30.60) scale(1,1)" text-anchor="middle" font-family="DejaVu Sans Mono, Liberation Mono, monospace" font-size="10.2" fill="#6574bd">18</text><text transform="translate(8.5,52.60) scale(1,1)" text-anchor="middle" font-family="DejaVu Sans Mono, Liberation Mono, monospace" font-size="10.2" fill="#6574bd">17</text><text transform="translate(8.5,74.60) scale(1,1)" text-anchor="middle" font-family="DejaVu Sans Mono, Liberation Mono, monospace" font-size="10.2" fill="#6574bd">16</text><text transform="translate(8.5,96.60) scale(1,1)" text-anchor="middle" font-family="DejaVu Sans Mono, Liberation Mono, monospace" font-size="10.2" font-weight="bold" fill="#f8f8f2">15</text><text transform="translate(8.5,118.60) scale(1,1)" text-anchor="middle" font-family="DejaVu Sans Mono, Liberation Mono, monospace" font-size="10.2" fill="#6574bd">14</text><text transform="translate(8.5,140.60) scale(1,1)" text-anchor="middle" font-family="DejaVu Sans Mono, Liberation Mono, monospace" font-size="10.2" fill="#6574bd">13</text><text transform="translate(8.5,162.60) scale(1,1)" text-anchor="middle" font-family="DejaVu Sans Mono, Liberation Mono, monospace" font-size="10.2" fill="#6574bd">12</text><text transform="translate(8.5,184.60) scale(1,1)" text-anchor="middle" font-family="DejaVu Sans Mono, Liberation Mono, monospace" font-size="10.2" fill="#6574bd">11</text><text transform="translate(8.5,206.60) scale(1,1)" text-anchor="middle" font-family="DejaVu Sans Mono, Liberation Mono, monospace" font-size="10.2" font-weight="bold" fill="#f8f8f2">10</text><text transform="translate(8.5,228.60) scale(1,1)" text-anchor="middle" font-family="DejaVu Sans Mono, Liberation Mono, monospace" font-size="10.2" fill="#6574bd">9</text><text transform="translate(8.5,250.60) scale(1,1)" text-anchor="middle" font-family="DejaVu Sans Mono, Liberation Mono, monospace" font-size="10.2" fill="#6574bd">8</text><text transform="translate(8.5,272.60) scale(1,1)" text-anchor="middle" font-family="DejaVu Sans Mono, Liberation Mono, monospace" font-size="10.2" fill="#6574bd">7</text><text transform="translate(8.5,294.60) scale(1,1)" text-anchor="middle" font-family="DejaVu Sans Mono, Liberation Mono, monospace" font-size="10.2" fill="#6574bd">6</text><text transform="translate(8.5,316.60) scale(1,1)" text-anchor="middle" font-family="DejaVu Sans Mono, Liberation Mono, monospace" font-size="10.2" font-weight="bold" fill="#f8f8f2">5</text><text transform="translate(8.5,338.60) scale(1,1)" text-anchor="middle" font-family="DejaVu Sans Mono, Liberation Mono, monospace" font-size="10.2" fill="#6574bd">4</text><text transform="translate(8.5,360.60) scale(1,1)" text-anchor="middle" font-family="DejaVu Sans Mono, Liberation Mono, monospace" font-size="10.2" fill="#6574bd">3</text><text transform="translate(8.5,382.60) scale(1,1)" text-anchor="middle" font-family="DejaVu Sans Mono, Liberation Mono, monospace" font-size="10.2" fill="#6574bd">2</text><text transform="translate(8.5,404.60) scale(1,1)" text-anchor="middle" font-family="DejaVu Sans Mono, Liberation Mono, monospace" font-size="10.2" fill="#6574bd">1</text><rect x="17" y="17" width="186" height="22" rx="2" fill="#4a7a8c"/><g transform="translate(25,20.9) scale(0.5916666666666667)" fill="none" stroke="#f1f1ea" stroke-width="2" stroke-linecap="round" stroke-linejoin="round"><rect width="20" height="8" x="2" y="2" rx="2" ry="2"/><rect width="20" height="8" x="2" y="14" rx="2" ry="2"/><line x1="6" x2="6.01" y1="6" y2="6"/><line x1="6" x2="6.01" y1="18" y2="18"/></g><text x="110" y="32.09" text-anchor="middle" font-family="Liberation Sans, sans-serif" font-size="13" font-weight="bold" fill="#f8f8f2">Intel NUC</text><rect x="17" y="72" width="186" height="11" rx="2" fill="#4a7a8c"/><text x="110" y="81.59" text-anchor="middle" font-family="Liberation Sans, sans-serif" font-size="13" font-weight="bold" fill="#f8f8f2">Raspberry Pi 4</text><rect x="17" y="149" width="186" height="44" rx="2" fill="#4a7a8c"/><g transform="translate(25,163.9) scale(0.5916666666666667)" fill="none" stroke="#f1f1ea" stroke-width="2" stroke-linecap="round" stroke-linejoin="round"><rect width="20" height="8" x="2" y="2" rx="2" ry="2"/><rect width="20" height="8" x="2" y="14" rx="2" ry="2"/><line x1="6" x2="6.01" y1="6" y2="6"/><line x1="6" x2="6.01" y1="18" y2="18"/></g><text x="110" y="173.87" text-anchor="middle" font-family="Liberation Sans, sans-serif" font-size="9.1" font-weight="bold" fill="#f8f8f2">Blade Server (Half-Height)</text><rect x="17" y="193" width="186" height="88" rx="2" fill="#3d7a4a"/><rect x="17.8" y="193.8" width="184.4" height="86.4" rx="2" fill="none" stroke="#ff79c6" stroke-width="1.6"/><g transform="translate(25,229.9) scale(0.5916666666666667)" fill="none" stroke="#f1f1ea" stroke-width="2" stroke-linecap="round" stroke-linejoin="round"><line x1="22" x2="2" y1="12" y2="12"/><path d="M5.45 5.11 2 12v6a2 2 0 0 0 2 2h16a2 2 0 0 0 2-2v-6l-3.45-6.89A2 2 0 0 0 16.76 4H7.24a2 2 0 0 0-1.79 1.11z"/><line x1="6" x2="6.01" y1="16" y2="16"/><line x1="10" x2="10.01" y1="16" y2="16"/></g><text x="110" y="241.09" text-anchor="middle" font-family="Liberation Sans, sans-serif" font-size="13" font-weight="bold" fill="#f8f8f2">Storage</text><rect x="17" y="303" width="186" height="44" rx="2" fill="#3d7a4a"/><g transform="translate(25,317.9) scale(0.5916666666666667)" fill="none" stroke="#f1f1ea" stroke-width="2" stroke-linecap="round" stroke-linejoin="round"><line x1="22" x2="2" y1="12" y2="12"/><path d="M5.45 5.11 2 12v6a2 2 0 0 0 2 2h16a2 2 0 0 0 2-2v-6l-3.45-6.89A2 2 0 0 0 16.76 4H7.24a2 2 0 0 0-1.79 1.11z"/><line x1="6" x2="6.01" y1="16" y2="16"/><line x1="10" x2="10.01" y1="16" y2="16"/></g><text x="110" y="329.10" text-anchor="middle" font-family="Liberation Sans, sans-serif" font-size="13" font-weight="bold" fill="#f8f8f2">RS3621xs+</text></g><g transform="translate(1043.6,324.3) scale(1.398)"><rect x="0" y="0" width="220" height="430" fill="#444652"/><rect x="17" y="17" width="186" height="396" fill="#2c2e3a"/><rect x="17" y="17" width="186" height="22" fill="#30323e"/><rect x="17" y="61" width="186" height="22" fill="#30323e"/><rect x="17" y="105" width="186" height="22" fill="#30323e"/><rect x="17" y="149" width="186" height="22" fill="#30323e"/><rect x="17" y="193" width="186" height="22" fill="#30323e"/><rect x="17" y="237" width="186" height="22" fill="#30323e"/><rect x="17" y="281" width="186" height="22" fill="#30323e"/><rect x="17" y="325" width="186" height="22" fill="#30323e"/><rect x="17" y="369" width="186" height="22" fill="#30323e"/><rect x="0" y="16.65" width="220" height="0.7" fill="#555766" opacity="0.6"/><rect x="17" y="38.65" width="186" height="0.7" fill="#4c4e5c" opacity="0.5"/><rect x="17" y="60.65" width="186" height="0.7" fill="#4c4e5c" opacity="0.5"/><rect x="17" y="82.65" width="186" height="0.7" fill="#4c4e5c" opacity="0.5"/><rect x="17" y="104.65" width="186" height="0.7" fill="#4c4e5c" opacity="0.5"/><rect x="17" y="126.65" width="186" height="0.7" fill="#4c4e5c" opacity="0.5"/><rect x="17" y="148.65" width="186" height="0.7" fill="#4c4e5c" opacity="0.5"/><rect x="17" y="170.65" width="186" height="0.7" fill="#4c4e5c" opacity="0.5"/><rect x="17" y="192.65" width="186" height="0.7" fill="#4c4e5c" opacity="0.5"/><rect x="17" y="214.65" width="186" height="0.7" fill="#4c4e5c" opacity="0.5"/><rect x="17" y="236.65" width="186" height="0.7" fill="#4c4e5c" opacity="0.5"/><rect x="17" y="258.65" width="186" height="0.7" fill="#4c4e5c" opacity="0.5"/><rect x="17" y="280.65" width="186" height="0.7" fill="#4c4e5c" opacity="0.5"/><rect x="17" y="302.65" width="186" height="0.7" fill="#4c4e5c" opacity="0.5"/><rect x="17" y="324.65" width="186" height="0.7" fill="#4c4e5c" opacity="0.5"/><rect x="17" y="346.65" width="186" height="0.7" fill="#4c4e5c" opacity="0.5"/><rect x="17" y="368.65" width="186" height="0.7" fill="#4c4e5c" opacity="0.5"/><rect x="17" y="390.65" width="186" height="0.7" fill="#4c4e5c" opacity="0.5"/><rect x="0" y="412.65" width="220" height="0.7" fill="#555766" opacity="0.6"/><g fill="#383a4b"><rect x="13" y="19" width="3" height="4"/><rect x="204" y="19" width="3" height="4"/><rect x="13" y="26" width="3" height="4"/><rect x="204" y="26" width="3" height="4"/><rect x="13" y="33" width="3" height="4"/><rect x="204" y="33" width="3" height="4"/><rect x="13" y="41" width="3" height="4"/><rect x="204" y="41" width="3" height="4"/><rect x="13" y="48" width="3" height="4"/><rect x="204" y="48" width="3" height="4"/><rect x="13" y="55" width="3" height="4"/><rect x="204" y="55" width="3" height="4"/><rect x="13" y="63" width="3" height="4"/><rect x="204" y="63" width="3" height="4"/><rect x="13" y="70" width="3" height="4"/><rect x="204" y="70" width="3" height="4"/><rect x="13" y="77" width="3" height="4"/><rect x="204" y="77" width="3" height="4"/><rect x="13" y="85" width="3" height="4"/><rect x="204" y="85" width="3" height="4"/><rect x="13" y="92" width="3" height="4"/><rect x="204" y="92" width="3" height="4"/><rect x="13" y="99" width="3" height="4"/><rect x="204" y="99" width="3" height="4"/><rect x="13" y="107" width="3" height="4"/><rect x="204" y="107" width="3" height="4"/><rect x="13" y="114" width="3" height="4"/><rect x="204" y="114" width="3" height="4"/><rect x="13" y="121" width="3" height="4"/><rect x="204" y="121" width="3" height="4"/><rect x="13" y="129" width="3" height="4"/><rect x="204" y="129" width="3" height="4"/><rect x="13" y="136" width="3" height="4"/><rect x="204" y="136" width="3" height="4"/><rect x="13" y="143" width="3" height="4"/><rect x="204" y="143" width="3" height="4"/><rect x="13" y="151" width="3" height="4"/><rect x="204" y="151" width="3" height="4"/><rect x="13" y="158" width="3" height="4"/><rect x="204" y="158" width="3" height="4"/><rect x="13" y="165" width="3" height="4"/><rect x="204" y="165" width="3" height="4"/><rect x="13" y="173" width="3" height="4"/><rect x="204" y="173" width="3" height="4"/><rect x="13" y="180" width="3" height="4"/><rect x="204" y="180" width="3" height="4"/><rect x="13" y="187" width="3" height="4"/><rect x="204" y="187" width="3" height="4"/><rect x="13" y="195" width="3" height="4"/><rect x="204" y="195" width="3" height="4"/><rect x="13" y="202" width="3" height="4"/><rect x="204" y="202" width="3" height="4"/><rect x="13" y="209" width="3" height="4"/><rect x="204" y="209" width="3" height="4"/><rect x="13" y="217" width="3" height="4"/><rect x="204" y="217" width="3" height="4"/><rect x="13" y="224" width="3" height="4"/><rect x="204" y="224" width="3" height="4"/><rect x="13" y="231" width="3" height="4"/><rect x="204" y="231" width="3" height="4"/><rect x="13" y="239" width="3" height="4"/><rect x="204" y="239" width="3" height="4"/><rect x="13" y="246" width="3" height="4"/><rect x="204" y="246" width="3" height="4"/><rect x="13" y="253" width="3" height="4"/><rect x="204" y="253" width="3" height="4"/><rect x="13" y="261" width="3" height="4"/><rect x="204" y="261" width="3" height="4"/><rect x="13" y="268" width="3" height="4"/><rect x="204" y="268" width="3" height="4"/><rect x="13" y="275" width="3" height="4"/><rect x="204" y="275" width="3" height="4"/><rect x="13" y="283" width="3" height="4"/><rect x="204" y="283" width="3" height="4"/><rect x="13" y="290" width="3" height="4"/><rect x="204" y="290" width="3" height="4"/><rect x="13" y="297" width="3" height="4"/><rect x="204" y="297" width="3" height="4"/><rect x="13" y="305" width="3" height="4"/><rect x="204" y="305" width="3" height="4"/><rect x="13" y="312" width="3" height="4"/><rect x="204" y="312" width="3" height="4"/><rect x="13" y="319" width="3" height="4"/><rect x="204" y="319" width="3" height="4"/><rect x="13" y="327" width="3" height="4"/><rect x="204" y="327" width="3" height="4"/><rect x="13" y="334" width="3" height="4"/><rect x="204" y="334" width="3" height="4"/><rect x="13" y="341" width="3" height="4"/><rect x="204" y="341" width="3" height="4"/><rect x="13" y="349" width="3" height="4"/><rect x="204" y="349" width="3" height="4"/><rect x="13" y="356" width="3" height="4"/><rect x="204" y="356" width="3" height="4"/><rect x="13" y="363" width="3" height="4"/><rect x="204" y="363" width="3" height="4"/><rect x="13" y="371" width="3" height="4"/><rect x="204" y="371" width="3" height="4"/><rect x="13" y="378" width="3" height="4"/><rect x="204" y="378" width="3" height="4"/><rect x="13" y="385" width="3" height="4"/><rect x="204" y="385" width="3" height="4"/><rect x="13" y="393" width="3" height="4"/><rect x="204" y="393" width="3" height="4"/><rect x="13" y="400" width="3" height="4"/><rect x="204" y="400" width="3" height="4"/><rect x="13" y="407" width="3" height="4"/><rect x="204" y="407" width="3" height="4"/></g><text x="110" y="12.6" text-anchor="middle" font-family="Liberation Sans, sans-serif" font-size="10.6" font-weight="bold" letter-spacing="0.5" fill="#9b9b9b">REAR</text><text transform="translate(8.5,30.60) scale(1,1)" text-anchor="middle" font-family="DejaVu Sans Mono, Liberation Mono, monospace" font-size="10.2" fill="#6574bd">18</text><text transform="translate(8.5,52.60) scale(1,1)" text-anchor="middle" font-family="DejaVu Sans Mono, Liberation Mono, monospace" font-size="10.2" fill="#6574bd">17</text><text transform="translate(8.5,74.60) scale(1,1)" text-anchor="middle" font-family="DejaVu Sans Mono, Liberation Mono, monospace" font-size="10.2" fill="#6574bd">16</text><text transform="translate(8.5,96.60) scale(1,1)" text-anchor="middle" font-family="DejaVu Sans Mono, Liberation Mono, monospace" font-size="10.2" font-weight="bold" fill="#f8f8f2">15</text><text transform="translate(8.5,118.60) scale(1,1)" text-anchor="middle" font-family="DejaVu Sans Mono, Liberation Mono, monospace" font-size="10.2" fill="#6574bd">14</text><text transform="translate(8.5,140.60) scale(1,1)" text-anchor="middle" font-family="DejaVu Sans Mono, Liberation Mono, monospace" font-size="10.2" fill="#6574bd">13</text><text transform="translate(8.5,162.60) scale(1,1)" text-anchor="middle" font-family="DejaVu Sans Mono, Liberation Mono, monospace" font-size="10.2" fill="#6574bd">12</text><text transform="translate(8.5,184.60) scale(1,1)" text-anchor="middle" font-family="DejaVu Sans Mono, Liberation Mono, monospace" font-size="10.2" fill="#6574bd">11</text><text transform="translate(8.5,206.60) scale(1,1)" text-anchor="middle" font-family="DejaVu Sans Mono, Liberation Mono, monospace" font-size="10.2" font-weight="bold" fill="#f8f8f2">10</text><text transform="translate(8.5,228.60) scale(1,1)" text-anchor="middle" font-family="DejaVu Sans Mono, Liberation Mono, monospace" font-size="10.2" fill="#6574bd">9</text><text transform="translate(8.5,250.60) scale(1,1)" text-anchor="middle" font-family="DejaVu Sans Mono, Liberation Mono, monospace" font-size="10.2" fill="#6574bd">8</text><text transform="translate(8.5,272.60) scale(1,1)" text-anchor="middle" font-family="DejaVu Sans Mono, Liberation Mono, monospace" font-size="10.2" fill="#6574bd">7</text><text transform="translate(8.5,294.60) scale(1,1)" text-anchor="middle" font-family="DejaVu Sans Mono, Liberation Mono, monospace" font-size="10.2" fill="#6574bd">6</text><text transform="translate(8.5,316.60) scale(1,1)" text-anchor="middle" font-family="DejaVu Sans Mono, Liberation Mono, monospace" font-size="10.2" font-weight="bold" fill="#f8f8f2">5</text><text transform="translate(8.5,338.60) scale(1,1)" text-anchor="middle" font-family="DejaVu Sans Mono, Liberation Mono, monospace" font-size="10.2" fill="#6574bd">4</text><text transform="translate(8.5,360.60) scale(1,1)" text-anchor="middle" font-family="DejaVu Sans Mono, Liberation Mono, monospace" font-size="10.2" fill="#6574bd">3</text><text transform="translate(8.5,382.60) scale(1,1)" text-anchor="middle" font-family="DejaVu Sans Mono, Liberation Mono, monospace" font-size="10.2" fill="#6574bd">2</text><text transform="translate(8.5,404.60) scale(1,1)" text-anchor="middle" font-family="DejaVu Sans Mono, Liberation Mono, monospace" font-size="10.2" fill="#6574bd">1</text><rect x="17" y="17" width="186" height="22" fill="url(#hatch)"/><rect x="17" y="72" width="186" height="11" fill="url(#hatch)"/><rect x="17" y="149" width="186" height="44" fill="url(#hatch)"/><rect x="17" y="193" width="186" height="88" rx="2" fill="#3d7a4a"/><rect x="17.8" y="193.8" width="184.4" height="86.4" rx="2" fill="none" stroke="#ff79c6" stroke-width="1.6"/><g transform="translate(25,229.9) scale(0.5916666666666667)" fill="none" stroke="#f1f1ea" stroke-width="2" stroke-linecap="round" stroke-linejoin="round"><line x1="22" x2="2" y1="12" y2="12"/><path d="M5.45 5.11 2 12v6a2 2 0 0 0 2 2h16a2 2 0 0 0 2-2v-6l-3.45-6.89A2 2 0 0 0 16.76 4H7.24a2 2 0 0 0-1.79 1.11z"/><line x1="6" x2="6.01" y1="16" y2="16"/><line x1="10" x2="10.01" y1="16" y2="16"/></g><text x="110" y="241.09" text-anchor="middle" font-family="Liberation Sans, sans-serif" font-size="13" font-weight="bold" fill="#f8f8f2">Storage</text><rect x="17" y="303" width="186" height="44" rx="2" fill="#3d7a4a"/><g transform="translate(25,317.9) scale(0.5916666666666667)" fill="none" stroke="#f1f1ea" stroke-width="2" stroke-linecap="round" stroke-linejoin="round"><line x1="22" x2="2" y1="12" y2="12"/><path d="M5.45 5.11 2 12v6a2 2 0 0 0 2 2h16a2 2 0 0 0 2-2v-6l-3.45-6.89A2 2 0 0 0 16.76 4H7.24a2 2 0 0 0-1.79 1.11z"/><line x1="6" x2="6.01" y1="16" y2="16"/><line x1="10" x2="10.01" y1="16" y2="16"/></g><text x="110" y="329.10" text-anchor="middle" font-family="Liberation Sans, sans-serif" font-size="13" font-weight="bold" fill="#f8f8f2">RS3621xs+</text></g></svg><div id="panel"><div class="t" style="left:16px;top:18px;font-size:16px;font-weight:bold;color:#f8f8f2">Edit</div><div class="abs" style="left:-1px;top:49px;width:321px;height:1px;background:#44475a"></div><div class="abs" style="left:311px;top:50px;width:8px;height:820px;background:#343746"></div><div class="abs" style="left:311px;top:50px;width:8px;height:674px;border-radius:4px;background:#44475a"></div><div class="lbl" style="left:16px;top:70px">Name</div><div class="inp" style="left:16px;top:93px;width:279px;height:39px"></div><div class="t" style="left:29px;top:105.5px;font-size:14.5px;color:#f8f8f2">Storage</div><svg style="position:absolute;left:269px;top:107px;" width="12" height="12" viewBox="0 0 24 24" fill="none" stroke="#8f91a3" stroke-width="1.6" stroke-linecap="round" stroke-linejoin="round"><path d="M21.174 6.812a1 1 0 0 0-3.986-3.987L3.842 16.174a2 2 0 0 0-.5.83l-1.321 4.352a.5.5 0 0 0 .623.622l4.353-1.32a2 2 0 0 0 .83-.497z"/><path d="m15 5 4 4"/></svg><div class="mut" style="left:16px;top:151px">Device Type</div><div class="val" style="left:95px;width:200px;top:151.5px;font-size:14.5px">Storage</div><div class="abs" style="left:219px;top:151px;width:16px;height:16px;border-radius:2px;background:#3d7a4a"></div><div class="mut" style="left:16px;top:180px">Brand</div><div class="val" style="left:95px;width:200px;top:180.5px;font-size:14.5px">Generic</div><svg style="position:absolute;left:219px;top:180px;" width="16" height="16" viewBox="0 0 24 24" fill="none" stroke="#b9bbc8" stroke-width="1.8" stroke-linecap="round" stroke-linejoin="round"><path d="M4 14a1 1 0 0 1-.78-1.63l9.9-10.2a.5.5 0 0 1 .86.46l-1.92 6.02A1 1 0 0 0 13 10h7a1 1 0 0 1 .78 1.63l-9.9 10.2a.5.5 0 0 1-.86-.46l1.92-6.02A1 1 0 0 0 11 14z"/></svg><div class="mut" style="left:16px;top:217px">Height</div><div class="val" style="left:95px;width:200px;top:217.5px;font-size:14.5px">4U</div><div class="mut" style="left:16px;top:246px">Category</div><div class="val" style="left:95px;width:200px;top:246.5px;font-size:14.5px">Storage</div><div class="mut" style="left:16px;top:274px">Position</div><div class="t" style="left:131px;top:277.5px;font-size:14.5px;color:#f8f8f2">U7</div><div class="sbtn" style="left:174px;top:272px"></div><svg style="position:absolute;left:179.5px;top:277.5px;" width="13" height="13" viewBox="0 0 24 24" fill="none" stroke="#f8f8f2" stroke-width="2.2" stroke-linecap="round" stroke-linejoin="round"><path d="M12 5v14"/><path d="m19 12-7 7-7-7"/></svg><div class="sbtn" style="left:202px;top:272px;background:#2b2d3a;border-color:#363848"></div><svg style="position:absolute;left:207.5px;top:277.5px;" width="13" height="13" viewBox="0 0 24 24" fill="none" stroke="#777a8b" stroke-width="2.2" stroke-linecap="round" stroke-linejoin="round"><path d="M12 19V5"/><path d="m5 12 7-7 7 7"/></svg><div class="abs" style="left:234px;top:276px;width:1px;height:16px;background:#44475a"></div><div class="sbtn" style="left:243px;top:272px">-⅓</div><div class="sbtn" style="left:271px;top:272px">+⅓</div><div class="mut" style="left:16px;top:310.5px;font-size:13.6px;letter-spacing:0.1px">Use <span style="font-family:DejaVu Sans,sans-serif;font-size:11.8px">↑↓</span> keys (Shift for ⅓U)</div><div class="mut" style="left:16px;top:342px">Colour</div><div class="abs" style="left:217px;top:342px;width:16px;height:16px;border-radius:2px;background:#3d7a4a"></div><div class="t mono" style="left:241px;top:343px;font-size:12.8px;color:#f8f8f2;-webkit-text-stroke:0.3px #f8f8f2">#3D7A4A</div><div class="lbl" style="left:16px;top:385px">Mounted Face</div><div class="inp" style="left:16px;top:408px;width:279px;height:37px"></div><div class="t" style="left:33px;top:418.79999999999995px;font-size:15.2px;color:#f8f8f2;-webkit-text-stroke:0.25px #f8f8f2">Both (full-depth)</div><svg class="abs" style="left:280px;top:422.5px" width="10" height="8" viewBox="0 0 10 8" fill="none" stroke="#f8f8f2" stroke-width="1.7" stroke-linecap="round" stroke-linejoin="round"><path d="M1.2 1.8 5 5.8l3.8-4"/></svg><div class="lbl" style="left:16px;top:465px">Front Image</div><svg class="abs" style="left:16px;top:490px" width="80" height="60" viewBox="0 0 80 60"><defs><linearGradient id="tg1" x1="0" y1="0" x2="0" y2="1"><stop offset="0" stop-color="#e6e6ee"/><stop offset="0.1" stop-color="#8f93e6"/><stop offset="0.35" stop-color="#8a83dc"/><stop offset="0.5" stop-color="#c77fc4"/><stop offset="0.56" stop-color="#e8a070"/><stop offset="0.6" stop-color="#d8607a"/><stop offset="0.7" stop-color="#8d7fc8"/><stop offset="0.74" stop-color="#3b4a78"/><stop offset="1" stop-color="#3a3d4c"/></linearGradient><linearGradient id="tg2" x1="0" y1="0" x2="0.25" y2="1"><stop offset="0" stop-color="#8b9ac9"/><stop offset="0.4" stop-color="#a884b4"/><stop offset="0.7" stop-color="#7f84ad"/><stop offset="1" stop-color="#5b6680"/></linearGradient><linearGradient id="tg3" x1="0" y1="0" x2="0" y2="1"><stop offset="0" stop-color="#aba18d"/><stop offset="0.55" stop-color="#b3ab9a"/><stop offset="0.62" stop-color="#45464a"/><stop offset="1" stop-color="#2b2c31"/></linearGradient><clipPath id="tc"><rect x="0.5" y="0.5" width="79" height="59" rx="3.5"/></clipPath></defs><g clip-path="url(#tc)"><rect width="80" height="60" fill="#aca28e"/><rect x="5" y="0" width="9" height="60" fill="url(#tg3)"/><rect x="19" y="0" width="1.4" height="13" fill="#3a3935"/><rect x="23.3" y="2" width="1" height="9" fill="#4a4840"/><rect x="32" y="0" width="11" height="3" fill="#5a4b37"/><rect x="46" y="4" width="3" height="6" fill="#c8c2b4"/><rect x="10" y="20" width="3" height="6" fill="#7a6038"/><rect x="0" y="0" width="5" height="60" fill="url(#tg1)"/><path d="M12 36H27V60H12Z" fill="#232428"/><path d="M74 22H80V42L74 38Z" fill="#55554f"/><path d="M24.5 7.5 75 17.5 79.5 25V44L26 60H24.500Z" fill="#424245"/><path d="M13 22 24.5 8.5 25.8 60H22L13 44.500Z" fill="url(#tg2)"/><path d="M31 13.4 74 19.800V36.500L31 44.500Z" fill="#1d1d20"/><g fill="#5f5c57"><path d="M32.2 14.6 38.6 15.600V42.200L32.2 43.400Z"/><path d="M40.6 15.9 46.2 16.800V40.800L40.6 41.800Z"/><path d="M47.8 17 52.6 17.800V39.600L47.8 40.500Z"/><path d="M53.8 17.9 57.6 18.600V38.700L53.8 39.400Z"/><path d="M58.8 18.7 62 19.300V37.900L58.8 38.500Z"/><path d="M63.2 19.4 65.8 19.900V37.200L63.2 37.700Z"/><path d="M67 20 69.4 20.500V36.600L67 37Z"/><path d="M70.6 20.6 73 21V36L70.6 36.400Z"/></g><path d="M31 36.5 74 31V36.500L31 44.500Z" fill="#2a2a2d" opacity="0.6"/><path d="M26 60 80 43V50L48 60Z" fill="#141416"/><path d="M48 60 80 50V60Z" fill="#3b3b3e"/><path d="M62 60Q68 53 80 55V60Z" fill="#9d978a"/><g fill="#b8c4dc"><rect x="34" y="49" width="1.6" height="1.6"/><rect x="38.5" y="48.2" width="1" height="1"/><rect x="41" y="47.6" width="1" height="1"/><rect x="43.5" y="47" width="1" height="1"/><rect x="46" y="46.4" width="1" height="1"/><rect x="50" y="45.2" width="1.2" height="1"/></g><rect x="57" y="47" width="5" height="1.6" fill="#a09a88" transform="rotate(-14 57 47)"/><path d="M5 36H14V60H5Z" fill="#2c2d33" opacity="0.85"/><rect x="11.2" y="47.5" width="1.3" height="12.5" fill="#1ec02b"/></g><rect x="0.5" y="0.5" width="79" height="59" rx="3.5" fill="none" stroke="#44475a"/></svg><div class="abs" style="left:108px;top:501px;width:84px;height:37px;border:1px solid #ff5555;border-radius:6px"></div><div class="t" style="left:108px;width:84px;text-align:center;top:512.5px;font-size:13.6px;font-weight:bold;color:#ff5555">Remove</div><div class="mut" style="left:16px;top:558.5px;font-size:14px;white-space:normal;width:292px;line-height:19.2px;top:555.8px">Override the device type front image for this placement</div><div class="lbl" style="left:16px;top:615px">Rear Image</div><div class="abs" style="left:16px;top:640px;width:279px;height:35px;border-radius:6px;background:#343746"></div><div class="t" style="left:16px;width:279px;text-align:center;top:650.5px;font-size:13.6px;font-weight:bold;color:#f8f8f2">Choose File</div><div class="mut" style="left:16px;top:680.5px;font-size:14px;white-space:normal;width:292px;line-height:20px">Override the device type rear image for this placement</div><div class="lbl" style="left:16px;top:740px">IP Address/Hostname</div><div class="inp" style="left:16px;top:763px;width:279px;height:39px"></div><div class="t" style="left:29px;top:776px;font-size:13.6px;color:#6e7186">e.g., 192.168.1.100</div><div class="lbl" style="left:16px;top:822px">Notes</div><div class="inp" style="left:16px;top:845px;width:279px;height:60px"></div><div class="t" style="left:29px;top:856px;font-size:15px;color:#6e7186">Add notes about this device...</div></div></div></body></html>
